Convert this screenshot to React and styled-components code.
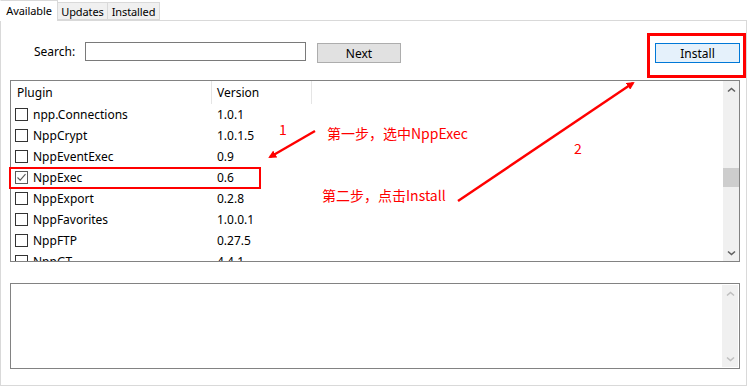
import React from "react";
import styled, { createGlobalStyle } from "styled-components";

const Global = createGlobalStyle`
  html, body { margin: 0; padding: 0; background: #fff; }
  body { font-family: "Noto Sans", "Liberation Sans", sans-serif; font-size: 12px; color: #000; }
  * { box-sizing: border-box; }
`;

const Shell = styled.div`
  position: relative;
  width: 750px;
  height: 388px;
  background: #fff;
  overflow: hidden;
`;

const TabStrip = styled.div`
  display: flex;
  align-items: flex-end;
  height: 20px;
  width: 747px;
  position: relative;
  z-index: 1;
`;

const Tab = styled.div`
  height: ${(p) => (p.$active ? "21px" : "18px")};
  margin-bottom: ${(p) => (p.$active ? "-1px" : "0")};
  width: ${(p) => p.$w}px;
  display: flex;
  align-items: center;
  justify-content: center;
  padding-bottom: ${(p) => (p.$active ? "2px" : "0")};
  background: ${(p) => (p.$active ? "#fff" : "#f0f0f0")};
  border: 1px solid #d9d9d9;
  border-bottom: ${(p) => (p.$active ? "none" : "1px solid #d9d9d9")};
  border-left: ${(p) => (p.$first ? "1px solid #fff" : "1px solid #d9d9d9")};
  margin-left: ${(p) => (p.$first ? "0" : "-1px")};
  font-size: 11px;
  line-height: 15px;
  letter-spacing: -0.1px;
  white-space: nowrap;
`;

const Page = styled.div`
  width: 747px;
  height: 366px;
  border: 1px solid #d9d9d9;
  background: #fff;
  padding: 21px 6px 0 9px;
  display: flex;
  flex-direction: column;
`;

const Toolbar = styled.div`
  display: flex;
  align-items: flex-start;
  height: 21px;
  padding-left: 24px;
`;

const Label = styled.span`
  width: 51px;
  font-size: 12px;
  line-height: 19px;
  flex: none;
`;

const SearchInput = styled.input`
  width: 221px;
  height: 19px;
  border: 1px solid #7a7a7a;
  outline: none;
  padding: 0 3px;
  font: inherit;
  margin: 0 11px 0 0;
`;

const Button = styled.button`
  width: ${(p) => p.$w}px;
  height: 20px;
  margin-top: 1px;
  padding: 0;
  font-family: inherit;
  font-size: 12px;
  color: #000;
  background: ${(p) => (p.$primary ? "#e5f1fb" : "#e1e1e1")};
  border: 1px solid ${(p) => (p.$primary ? "#0078d7" : "#adadad")};
  ${(p) => (p.$push ? "margin-left: auto;" : "")}
`;

const ListBox = styled.div`
  margin-top: 17px;
  height: 182px;
  border: 1px solid #828282;
  display: flex;
  overflow: hidden;
`;

const ListBody = styled.div`
  flex: 1;
  overflow: hidden;
`;

const HeaderRow = styled.div`
  display: flex;
  height: 23px;
`;

const HeaderCell = styled.div`
  width: ${(p) => p.$w}px;
  padding-left: ${(p) => p.$pad}px;
  border-right: 1px solid #e5e5e5;
  display: flex;
  align-items: center;
  line-height: 16px;
`;

const Row = styled.div`
  display: flex;
  height: 21px;
  align-items: center;
`;

const NameCell = styled.div`
  width: 200px;
  padding-left: 4px;
  display: flex;
  align-items: center;
  gap: 5px;
  white-space: nowrap;
`;

const VersionCell = styled.div`
  padding-left: 6px;
  white-space: nowrap;
`;

const Box = styled.span`
  width: 13px;
  height: 13px;
  border: 1px solid ${(p) => (p.$checked ? "#5a5a5a" : "#333")};
  background: #fff;
  display: inline-flex;
  align-items: center;
  justify-content: center;
  flex: none;
`;

const ScrollBar = styled.div`
  width: ${(p) => p.$w}px;
  background: #f0f0f0;
  display: flex;
  flex-direction: column;
  align-items: center;
  flex: none;
`;

const ArrowBtn = styled.div`
  height: 17px;
  width: 100%;
  display: flex;
  align-items: center;
  justify-content: center;
`;

const Track = styled.div`
  flex: 1;
  width: 100%;
  position: relative;
`;

const Thumb = styled.div`
  position: absolute;
  left: 0;
  right: 0;
  top: ${(p) => p.$top}px;
  height: ${(p) => p.$h}px;
  background: #cdcdcd;
`;

const DescBox = styled.div`
  margin-top: 21px;
  height: 86px;
  border: 1px solid #828282;
  display: flex;
  justify-content: flex-end;
  padding: 1px 1px 1px 0;
`;

/* Annotation overlay */
const Overlay = styled.div`
  position: absolute;
  inset: 0;
  pointer-events: none;
  z-index: 5;
`;

const RedBox = styled.div`
  position: absolute;
  left: ${(p) => p.$x}px;
  top: ${(p) => p.$y}px;
  width: ${(p) => p.$w}px;
  height: ${(p) => p.$h}px;
  border: ${(p) => p.$b}px solid #ff0000;
`;

const Note = styled.div`
  position: absolute;
  left: ${(p) => p.$x}px;
  top: ${(p) => p.$y}px;
  color: #ff0000;
  font-family: "Noto Sans CJK SC", "Noto Sans", sans-serif;
  font-size: 14px;
  line-height: 18px;
  white-space: nowrap;
`;

const ArrowLayer = styled.svg`
  position: absolute;
  left: 0;
  top: 0;
`;

const Chevron = ({ down, color = "#606060" }) => (
  <svg width="9" height="6" viewBox="0 0 9 6">
    <path
      d={down ? "M1 1.5 L4.5 4.5 L8 1.5" : "M1 4.5 L4.5 1.5 L8 4.5"}
      fill="none"
      stroke={color}
      strokeWidth="1.6"
    />
  </svg>
);

const Check = () => (
  <svg width="11" height="11" viewBox="0 0 11 11">
    <path d="M1.5 5.5 L4.2 8.2 L9.5 2.2" fill="none" stroke="#5a5a5a" strokeWidth="1.1" />
  </svg>
);

const plugins = [
  ["npp.Connections", "1.0.1"],
  ["NppCrypt", "1.0.1.5"],
  ["NppEventExec", "0.9"],
  ["NppExec", "0.6", true],
  ["NppExport", "0.2.8"],
  ["NppFavorites", "1.0.0.1"],
  ["NppFTP", "0.27.5"],
  ["NppGT", "4.4.1"],
];

export default function App() {
  return (
    <Shell>
      <Global />
      <TabStrip>
        <Tab $active $first $w={58}>Available</Tab>
        <Tab $w={51}>Updates</Tab>
        <Tab $w={53}>Installed</Tab>
      </TabStrip>
      <Page>
        <Toolbar>
          <Label>Search:</Label>
          <SearchInput />
          <Button $w={84}>Next</Button>
          <Button $w={85} $primary $push>Install</Button>
        </Toolbar>
        <ListBox>
          <ListBody>
            <HeaderRow>
              <HeaderCell $w={201} $pad={6}>Plugin</HeaderCell>
              <HeaderCell $w={100} $pad={5}>Version</HeaderCell>
            </HeaderRow>
            {plugins.map(([name, ver, checked]) => (
              <Row key={name}>
                <NameCell>
                  <Box $checked={checked}>{checked && <Check />}</Box>
                  {name}
                </NameCell>
                <VersionCell>{ver}</VersionCell>
              </Row>
            ))}
          </ListBody>
          <ScrollBar $w={16}>
            <ArrowBtn><Chevron /></ArrowBtn>
            <Track><Thumb $top={70} $h={19} /></Track>
            <ArrowBtn><Chevron down /></ArrowBtn>
          </ScrollBar>
        </ListBox>
        <DescBox>
          <ScrollBar $w={16}>
            <ArrowBtn><Chevron color="#bfbfbf" /></ArrowBtn>
            <Track />
            <ArrowBtn><Chevron down color="#bfbfbf" /></ArrowBtn>
          </ScrollBar>
        </DescBox>
      </Page>
      <Overlay>
        <RedBox $x={647} $y={33} $w={99} $h={45} $b={3} />
        <RedBox $x={9} $y={167} $w={252} $h={22} $b={2} />
        <Note $x={279} $y={120}>1</Note>
        <Note $x={574} $y={139}>2</Note>
        <Note $x={327} $y={124}>第一步，选中NppExec</Note>
        <Note $x={322} $y={186}>第二步，点击Install</Note>
        <ArrowLayer width="750" height="388" viewBox="0 0 750 388">
          <defs>
            <marker id="head" markerWidth="8" markerHeight="8" refX="6" refY="4" orient="auto" markerUnits="userSpaceOnUse">
              <path d="M0 0 L8 4 L0 8 Z" fill="#ff0000" />
            </marker>
          </defs>
          <line x1="315" y1="131" x2="270" y2="157" stroke="#ff0000" strokeWidth="2.4" markerEnd="url(#head)" />
          <line x1="458" y1="201" x2="633" y2="83" stroke="#ff0000" strokeWidth="2.4" markerEnd="url(#head)" />
        </ArrowLayer>
      </Overlay>
    </Shell>
  );
}
